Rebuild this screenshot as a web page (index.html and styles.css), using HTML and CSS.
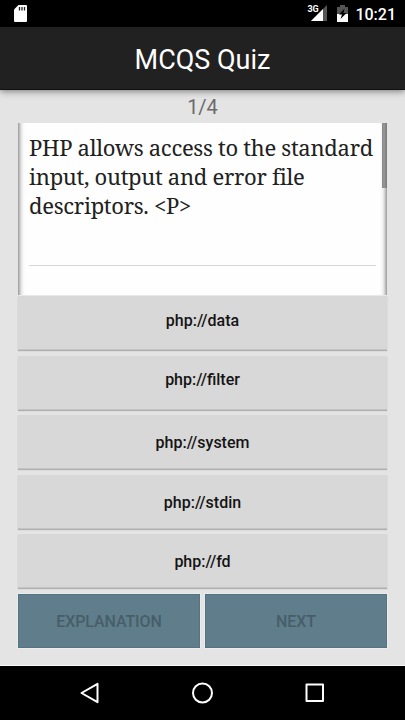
FILE: index.html
```
<!DOCTYPE html>
<html lang="en">
<head>
<meta charset="utf-8">
<title>MCQS Quiz</title>
<link rel="stylesheet" href="styles.css">
</head>
<body>
<div class="status">
  <svg class="sd" width="13" height="17" viewBox="0 0 13 17"><path d="M4.500 0H12q1 0 1 1v15q0 1-1 1H1q-1 0-1-1V4.500z" fill="#fff"/><path d="M5.500 2v3.500M8 2v3.500M10.500 2v3.500" stroke="#222" stroke-width="1.300"/></svg>
  <div class="signal">
    <span class="net">3G</span>
    <svg width="16" height="16" viewBox="0 0 16 16"><path d="M16 0v16H0z" fill="#555"/><path d="M12 4v12H0z" fill="#fff"/></svg>
  </div>
  <svg class="battery" width="11" height="17" viewBox="0 0 11 17"><path d="M3 0h5v2h3v15H0V2h3z" fill="#555"/><path d="M0 9h11v8H0z" fill="#fff"/><path d="M7.500 3.500L2 9.500h3L3.500 14 9.500 8h-3z" fill="#000"/></svg>
  <span class="clock">10:21</span>
</div>
<header class="appbar"><h1>MCQS Quiz</h1></header>
<main class="quiz">
  <div class="counter">1/4</div>
  <section class="question">
    <p><span>PHP allows access to the standard</span><span>input, output and error file</span><span>descriptors. &lt;P&gt;</span></p>
    <hr>
    <i class="scrollbar"></i>
  </section>
  <div class="answers">
    <button class="raised">php://data</button>
    <button class="raised">php://filter</button>
    <button>php://system</button>
    <button>php://stdin</button>
    <button>php://fd</button>
  </div>
  <div class="actions"><button>EXPLANATION</button><button>NEXT</button></div>
</main>
<nav class="navbar">
  <svg width="22" height="22" viewBox="0 0 22 22"><path d="M18.500 1.800v18.400L2.500 11z"/></svg>
  <svg width="22" height="22" viewBox="0 0 22 22"><circle cx="10.500" cy="11" r="9.500"/></svg>
  <svg width="22" height="22" viewBox="0 0 22 22"><path d="M2.500 2.500h16.500v16.500H2.500z"/></svg>
</nav>
</body>
</html>
```
FILE: styles.css
```
* { box-sizing: border-box; }
body { margin: 0; width: 405px; height: 720px; display: flex; flex-direction: column; overflow: hidden; background: #e4e4e4; font-family: Roboto, sans-serif; }
svg { display: block; flex: none; }
.status { height: 27px; flex: none; display: flex; align-items: flex-start; padding: 5px 9px 0 14px; background: #000; color: #fff; }
.sd { margin-right: auto; }
.signal { position: relative; margin-right: 10px; }
.net { position: absolute; left: -4px; top: 0; font-size: 9px; line-height: 9px; font-weight: 700; }
.battery { margin-right: 7px; }
.clock { font-size: 16px; line-height: 19px; font-weight: 500; }
.appbar { height: 63px; flex: none; display: flex; align-items: center; justify-content: center; background: #212121; color: #fff; border-bottom: 1px solid #111; box-shadow: 0 1px 7px rgba(0,0,0,.5); position: relative; }
.appbar h1 { margin: 4px 0 0; font-size: 27px; line-height: 32px; font-weight: 400; }
.quiz { height: 576px; flex: none; padding: 5px 18px 0; border-bottom: 1px solid #f8f8f8; }
.counter { height: 28px; font-size: 20px; line-height: 24px; text-align: center; color: #6b6b6b; }
.question { position: relative; height: 173px; padding: 10px 11px; background: linear-gradient(90deg, #999 0, #cacaca 2px, #efefef 4px, #fefefe 7px, #fefefe 362px, #efefef 365px, #cacaca 367px, #999 369px); border-bottom: 1px solid #e8e8e8; }
.question p { margin: 0; height: 132px; font-family: "Noto Serif", "Droid Serif", "DejaVu Serif Condensed", "DejaVu Serif", serif; font-size: 22px; line-height: 29px; letter-spacing: -.3px; color: #212121; white-space: nowrap; }
.question span { display: block; }
.question hr { margin: 0; border: 0; height: 1px; background: #d6d6d6; }
.scrollbar { position: absolute; top: 0; right: 0; width: 5px; height: 65px; background: linear-gradient(90deg, #858585, #999 40%, #777); }
.answers { display: flex; flex-direction: column; gap: 5.500px; height: 298px; }
button { margin: 0; padding: 0; border: 0; font: 500 16px/20px Roboto, sans-serif; }
.answers button { height: 54px; flex: none; padding-top: 3px; background: #d8d8d8; color: #141414; border-bottom: 1px solid #c4c4c4; box-shadow: 0 1px 1px #b0b0b0; }
.answers .raised { padding: 0 0 4px; }
.actions { display: grid; grid-template-columns: 182px 182px; gap: 5px; }
.actions button { height: 54px; padding-top: 2px; background: #607d8b; color: #475e69; border: 1px solid #557482; box-shadow: 0 0 0 1px #ebebeb; letter-spacing: -.1px; }
.navbar { height: 54px; background: #000; display: flex; align-items: center; justify-content: center; gap: 90.500px; }
.navbar svg { fill: none; stroke: #fff; stroke-width: 2; stroke-linejoin: round; }
```
